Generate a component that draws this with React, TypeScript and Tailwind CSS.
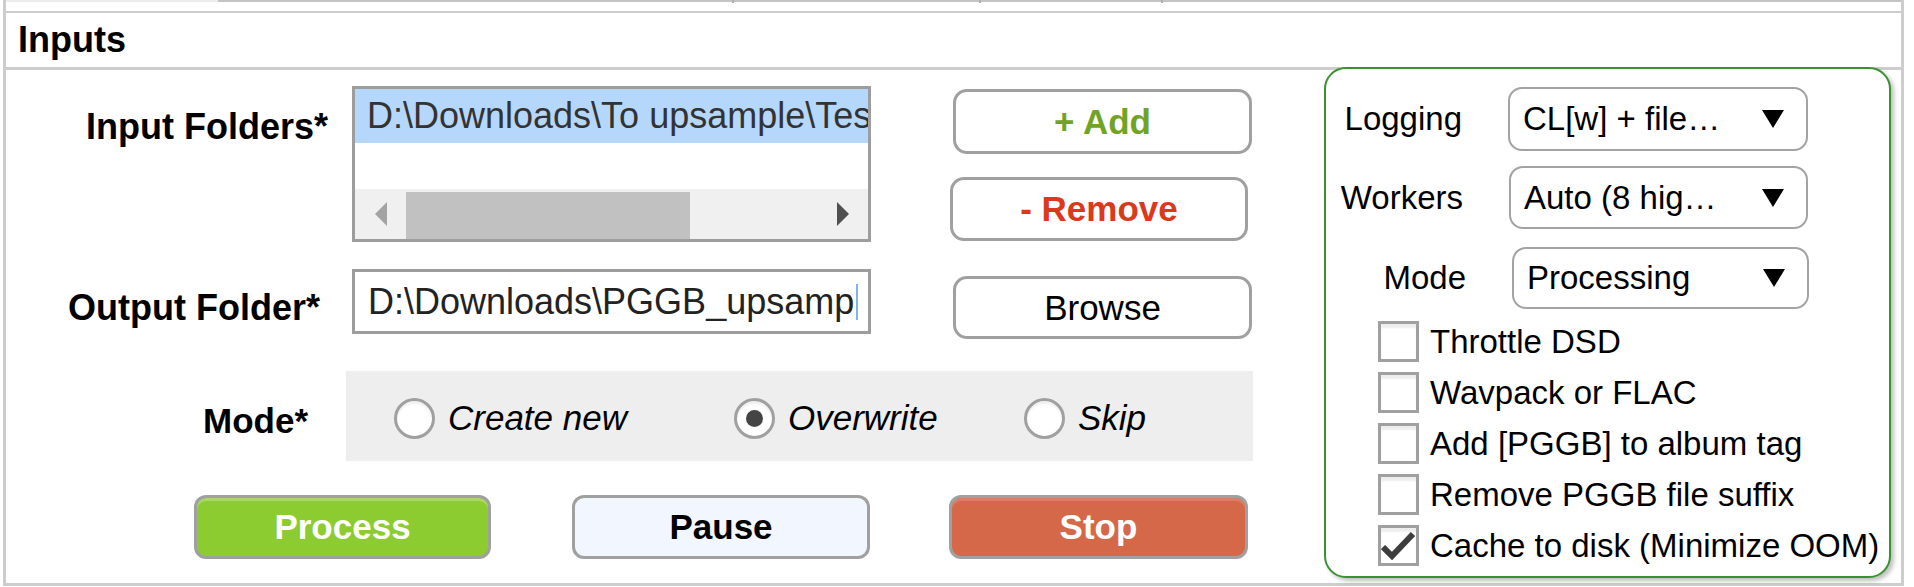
import React from "react";

function Triangle() {
  return (
    <svg width="22" height="18" viewBox="0 0 22 18" className="shrink-0">
      <polygon points="0,0 22,0 11,18" fill="#000" />
    </svg>
  );
}

function Dropdown({ text, className }: { text: string; className: string }) {
  return (
    <div
      className={`flex items-center justify-between border-[2px] border-[#a3a3a3] rounded-[14px] bg-white pl-[13px] pr-[22px] ${className}`}
    >
      <span className="text-[33px] leading-[38px] whitespace-nowrap">{text}</span>
      <Triangle />
    </div>
  );
}

function CheckRow({ label, checked }: { label: string; checked?: boolean }) {
  return (
    <div className="flex items-center h-[41px]">
      <div className="w-[41px] h-[41px] border-[3px] border-[#a0a0a0] bg-white shadow-[inset_0_4px_2px_rgba(0,0,0,0.07)] flex items-center justify-center">
        {checked && (
          <svg width="35" height="35" viewBox="0 0 35 35">
            <path d="M2 19 L11 28 L32 6" fill="none" stroke="#3d3d3d" strokeWidth="6" />
          </svg>
        )}
      </div>
      <span className="ml-[11px] text-[33px] leading-[38px] whitespace-nowrap">{label}</span>
    </div>
  );
}

function Radio({ label, checked, className }: { label: string; checked?: boolean; className?: string }) {
  return (
    <div className={`flex items-center ${className ?? ""}`}>
      <div className="w-[41px] h-[41px] rounded-full border-[3px] border-[#a0a0a0] bg-white shadow-[inset_0_3px_2px_rgba(0,0,0,0.06)] flex items-center justify-center">
        {checked && <div className="w-[17px] h-[17px] rounded-full bg-[#444]" />}
      </div>
      <span className="ml-[13px] text-[35px] leading-[40px] italic whitespace-nowrap">{label}</span>
    </div>
  );
}

export default function App() {
  return (
    <div className="w-[1914px] h-[587px] bg-white overflow-hidden font-['Liberation_Sans',Arial,sans-serif] text-black">
      <div className="ml-[3px] w-[1901px] h-[586px] border-x-[3px] border-[#cdcdcd] flex flex-col">
        {/* tab strip (mostly cut off) */}
        <div className="h-[11px] flex items-start shrink-0">
          <div className="w-[212px] h-[2px] bg-[#ececec]" />
          <div className="flex-1 h-[2px] bg-[#c4c4c4] flex">
            <div className="w-[514px]" />
            <div className="w-[2px] h-[3px] bg-[#b0b0b0]" />
            <div className="w-[245px]" />
            <div className="w-[2px] h-[3px] bg-[#b0b0b0]" />
            <div className="w-[180px]" />
            <div className="w-[2px] h-[3px] bg-[#b0b0b0]" />
          </div>
        </div>

        {/* header */}
        <div className="h-[59px] shrink-0 border-t-[2px] border-b-[3px] border-[#cdcdcd] flex items-center pl-[12px]">
          <span className="text-[36px] leading-[40px] font-bold">Inputs</span>
        </div>

        {/* body */}
        <div className="flex-1 flex border-b-[3px] border-[#cdcdcd]">
          {/* left side */}
          <div className="w-[1318px] shrink-0 flex flex-col">
            {/* input folders */}
            <div className="mt-[16px] h-[156px] flex">
              <div className="w-[322px] text-right pt-[21px]">
                <span className="text-[36px] leading-[40px] font-bold whitespace-nowrap">Input Folders*</span>
              </div>
              <div className="ml-[24px] w-[519px] h-[156px] border-[3px] border-[#9d9d9d] bg-white flex flex-col">
                <div className="h-[54px] bg-[#b5d7fc] flex items-center pl-[12px] overflow-hidden">
                  <span className="text-[36px] leading-[40px] text-[#333] whitespace-nowrap">
                    D:\Downloads\To upsample\Test
                  </span>
                </div>
                <div className="flex-1" />
                <div className="h-[50px] bg-[#f0f0f0] flex items-center">
                  <svg width="12" height="24" viewBox="0 0 12 24" className="ml-[20px]">
                    <polygon points="12,0 12,24 0,12" fill="#a3a3a3" />
                  </svg>
                  <div className="ml-[19px] w-[284px] h-[47px] self-end bg-[#c1c1c1]" />
                  <div className="flex-1" />
                  <svg width="12" height="24" viewBox="0 0 12 24" className="mr-[19px]">
                    <polygon points="0,0 0,24 12,12" fill="#505050" />
                  </svg>
                </div>
              </div>
              <div className="ml-[79px] w-[302px] flex flex-col">
                <div className="ml-[3px] mt-[3px] w-[299px] h-[65px] rounded-[14px] border-[3px] border-[#a0a0a0] bg-white flex items-center justify-center">
                  <span className="text-[35px] leading-[40px] font-bold text-[#71a326]">+ Add</span>
                </div>
                <div className="mt-[23px] w-[298px] h-[64px] rounded-[14px] border-[3px] border-[#a0a0a0] bg-white flex items-center justify-center">
                  <span className="text-[35px] leading-[40px] font-bold text-[#da3a1c]">- Remove</span>
                </div>
              </div>
            </div>

            {/* output folder */}
            <div className="mt-[27px] h-[70px] flex">
              <div className="w-[322px] text-right pr-[8px] pt-[19px]">
                <span className="text-[36px] leading-[40px] font-bold whitespace-nowrap">Output Folder*</span>
              </div>
              <div className="ml-[24px] w-[519px] h-[65px] border-[3px] border-[#9d9d9d] bg-white flex items-center pl-[13px] overflow-hidden">
                <span className="text-[36px] leading-[40px] text-[#222] whitespace-nowrap">
                  D:\Downloads\PGGB_upsamp
                </span>
                <div className="ml-[2px] w-[2px] h-[36px] shrink-0 bg-[#7fb4f0]" />
              </div>
              <div className="ml-[82px] mt-[7px] w-[299px] h-[63px] rounded-[14px] border-[3px] border-[#a0a0a0] bg-white flex items-center justify-center">
                <span className="text-[35px] leading-[40px]">Browse</span>
              </div>
            </div>

            {/* mode */}
            <div className="mt-[32px] h-[90px] flex">
              <div className="w-[322px] text-right pr-[20px] pt-[30px]">
                <span className="text-[35px] leading-[40px] font-bold">Mode*</span>
              </div>
              <div className="ml-[18px] w-[907px] h-[90px] bg-[#eeeeee] flex items-center pl-[48px] pt-[4px]">
                <Radio label="Create new" className="w-[340px]" />
                <Radio label="Overwrite" checked className="w-[290px]" />
                <Radio label="Skip" />
              </div>
            </div>

            {/* action buttons */}
            <div className="mt-[34px] h-[64px] flex">
              <div className="ml-[188px] w-[297px] h-[64px] rounded-[12px] border-[3px] border-[#a0a0a0] bg-[#8dcc31] shadow-[inset_0_3px_0_rgba(255,255,255,0.25)] flex items-center justify-center">
                <span className="text-[35px] leading-[40px] font-bold text-white">Process</span>
              </div>
              <div className="ml-[81px] w-[298px] h-[64px] rounded-[12px] border-[3px] border-[#a0a0a0] bg-[#f2f6fe] flex items-center justify-center">
                <span className="text-[35px] leading-[40px] font-bold">Pause</span>
              </div>
              <div className="ml-[79px] w-[299px] h-[64px] rounded-[12px] border-[3px] border-[#a0a0a0] bg-[#d6684a] shadow-[inset_0_3px_0_rgba(255,255,255,0.15)] flex items-center justify-center">
                <span className="text-[35px] leading-[40px] font-bold text-white">Stop</span>
              </div>
            </div>
          </div>

          {/* right options panel */}
          <div className="-mt-[3px] w-[567px] h-[511px] shrink-0 rounded-[22px] border-[2px] border-[#38922f] bg-white shadow-[3px_3px_4px_rgba(0,0,0,0.25)] flex flex-col pt-[18px]">
            <div className="flex items-center h-[64px]">
              <div className="w-[136px] text-right">
                <span className="text-[33px] leading-[38px]">Logging</span>
              </div>
              <Dropdown text="CL[w] + file…" className="ml-[46px] w-[300px] h-[64px]" />
            </div>
            <div className="mt-[15px] flex items-center h-[63px]">
              <div className="w-[137px] text-right">
                <span className="text-[33px] leading-[38px]">Workers</span>
              </div>
              <Dropdown text="Auto (8 hig…" className="ml-[46px] w-[299px] h-[63px]" />
            </div>
            <div className="mt-[18px] flex items-center h-[62px]">
              <div className="w-[140px] text-right">
                <span className="text-[33px] leading-[38px]">Mode</span>
              </div>
              <Dropdown text="Processing" className="ml-[46px] w-[297px] h-[62px]" />
            </div>
            <div className="mt-[12px] pl-[52px] flex flex-col gap-[10px]">
              <CheckRow label="Throttle DSD" />
              <CheckRow label="Wavpack or FLAC" />
              <CheckRow label="Add [PGGB] to album tag" />
              <CheckRow label="Remove PGGB file suffix" />
              <CheckRow label="Cache to disk (Minimize OOM)" checked />
            </div>
          </div>
        </div>
      </div>
    </div>
  );
}
